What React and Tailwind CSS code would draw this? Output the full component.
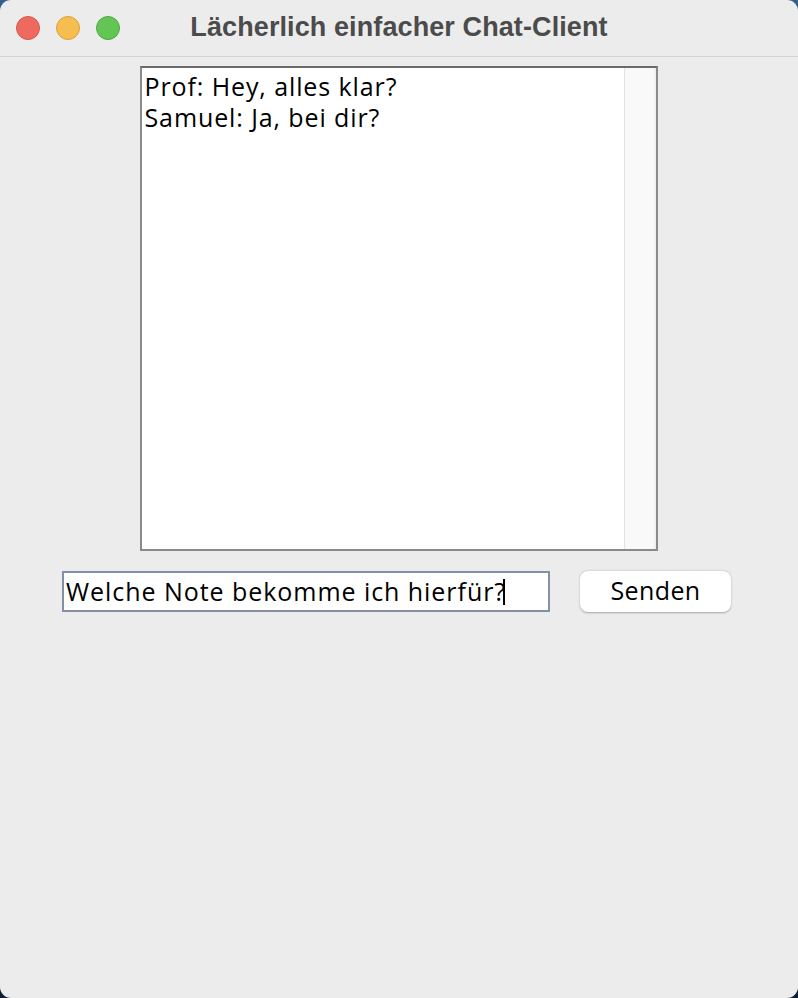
import React from 'react';

const App = () => {
  return (
    <div className="w-[798px] h-[998px] bg-gradient-to-b from-[#34608f] to-[#0c1e33]">
      <div className="w-full h-full rounded-[11px] bg-[#ececec] overflow-hidden flex flex-col" style={{ fontFamily: '"Open Sans", sans-serif' }}>
        {/* Title bar */}
        <div className="h-[57px] flex items-center border-b border-[#d2d2d2] relative shrink-0">
          <div className="flex gap-[16px] pl-[16px]">
            <span className="w-[24px] h-[24px] rounded-full bg-[#ee6a5f] border border-[#d6574c]" />
            <span className="w-[24px] h-[24px] rounded-full bg-[#f5be4f] border border-[#d9a23b]" />
            <span className="w-[24px] h-[24px] rounded-full bg-[#62c554] border border-[#4fa940]" />
          </div>
          <div className="absolute inset-0 flex items-center justify-center text-[#4b4b4b] font-bold text-[27px] tracking-[0.1px] pb-[2px]" style={{ fontFamily: '"Liberation Sans", sans-serif' }}>
            Lächerlich einfacher Chat-Client
          </div>
        </div>

        {/* Chat area */}
        <div className="flex justify-center pt-[9px] pr-[1px]">
          <div className="w-[518px] h-[485px] border-2 border-t-[#6a6a6a] border-l-[#8a8a8a] border-r-[#8a8a8a] border-b-[#8a8a8a] bg-white flex">
            <div className="flex-1 pl-[3px] pt-[3px] text-[25px] leading-[31px] tracking-[0.9px] text-black">
              <div>Prof: Hey, alles klar?</div>
              <div>Samuel: Ja, bei dir?</div>
            </div>
            <div className="w-[32px] bg-[#f9f9f9] border-l border-[#e3e3e3] border-r-[2px] border-r-[#f0f0f0]" />
          </div>
        </div>

        {/* Input row */}
        <div className="flex items-center pt-[20px] pl-[62px]">
          <div className="w-[488px] h-[41px] bg-white border-2 border-[#8391a6] flex items-center pl-[2px] pt-[1px] text-[25px] tracking-[0.95px] text-black">
            <span>Welche Note bekomme ich hierfür?</span>
            <span className="w-[2px] h-[26px] bg-black ml-[-3px]" />
          </div>
          <button className="ml-[30px] w-[151px] h-[41px] bg-white rounded-[8px] shadow-[0_0.5px_2px_rgba(0,0,0,0.3)] text-[25px] tracking-[0.4px] text-black flex items-center justify-center pb-[2px]">
            Senden
          </button>
        </div>
      </div>
    </div>
  );
};

export default App;
